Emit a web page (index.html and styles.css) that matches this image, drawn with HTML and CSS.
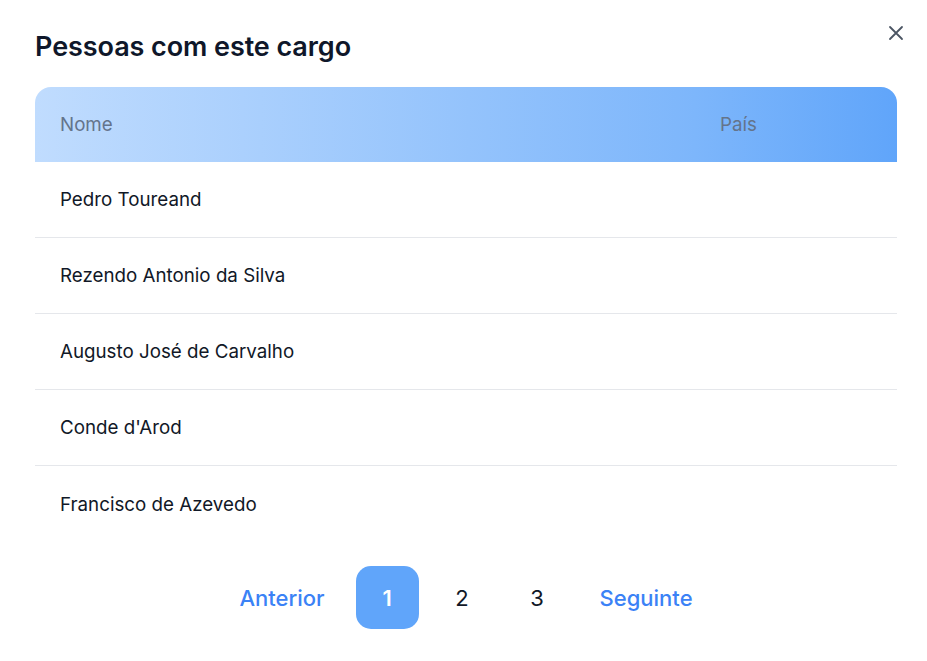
FILE: index.html
```html
<!DOCTYPE html>
<html lang="pt">
<head>
<meta charset="utf-8">
<title>Pessoas com este cargo</title>
<link rel="stylesheet" href="styles.css">
</head>
<body>
<div class="modal">
  <button class="close" aria-label="Fechar">
    <svg width="16" height="16" viewBox="0 0 16 16" fill="none" stroke="#4b5563" stroke-width="1.8" stroke-linecap="round"><path d="M2 2L14 14M14 2L2 14"/></svg>
  </button>
  <h1 class="title">Pessoas com este cargo</h1>
  <table class="table">
    <thead>
      <tr><th class="col-name">Nome</th><th class="col-country">País</th></tr>
    </thead>
    <tbody>
      <tr><td>Pedro Toureand</td><td></td></tr>
      <tr><td>Rezendo Antonio da Silva</td><td></td></tr>
      <tr><td>Augusto José de Carvalho</td><td></td></tr>
      <tr><td>Conde d'Arod</td><td></td></tr>
      <tr><td>Francisco de Azevedo</td><td></td></tr>
    </tbody>
  </table>
  <nav class="pager">
    <a class="link">Anterior</a>
    <a class="page active">1</a>
    <a class="page">2</a>
    <a class="page">3</a>
    <a class="link">Seguinte</a>
  </nav>
</div>
</body>
</html>
```

FILE: styles.css
```css
* { box-sizing: border-box; }
html, body { margin: 0; padding: 0; background: #fff; }
body { font-family: Inter, "Noto Sans", sans-serif; color: #111827; }
.modal { position: relative; padding: 29px 30px 0 35px; width: 927px; height: 661px; }
.close {
  position: absolute; top: 25px; right: 23px;
  background: none; border: 0; padding: 0; width: 16px; height: 16px; cursor: pointer;
}
.close svg { display: block; }
.title { margin: 0 0 22px; font-size: 27px; line-height: 36px; font-weight: 600; color: #0f172a; letter-spacing: -0.08px; }
.table { width: 862px; border-collapse: separate; border-spacing: 0; }
.table thead th {
  height: 75px; text-align: left; font-weight: 400; font-size: 18.75px; color: #64748b;
  padding: 0 25px;
}
.table thead th.col-name {
  border-top-left-radius: 16px; width: 660px;
  background: linear-gradient(90deg, #c0dcfe 0%, #7db6fb 100%);
}
.table thead th.col-country {
  border-top-right-radius: 16px;
  background: linear-gradient(90deg, #7db6fb 0%, #60a5fa 100%);
}
.table tbody td { height: 76px; padding: 0 25px; font-size: 18.75px; color: #111827; border-bottom: 1px solid #e5e7eb; }
.table tbody tr:last-child td { border-bottom: 0; }
.pager { display: flex; justify-content: center; align-items: center; gap: 12px; margin-top: 24px; width: 862px; }
.pager a { font-size: 22px; cursor: pointer; }
.link { color: #3b82f6; padding: 0 19px; font-weight: 500; }
.page { width: 63px; height: 63px; display: flex; align-items: center; justify-content: center; color: #111827; font-weight: 400; border-radius: 15px; }
.page.active { background: #60a5fa; color: #fff; font-weight: 600; }
```
